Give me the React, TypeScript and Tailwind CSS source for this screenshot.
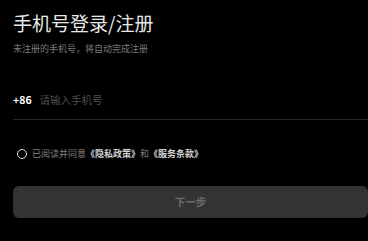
const App = () => {
  return (
    <div
      className="w-[368px] h-[241px] overflow-hidden bg-black pl-[13px] pt-[11px]"
      style={{ fontFamily: '"Noto Sans CJK SC", "Noto Sans", sans-serif' }}
    >
      {/* 标题 */}
      <h1 className="text-[19px] leading-[24px] text-[#e8e8e8]">手机号登录/注册</h1>
      <p className="mt-[8px] text-[9px] leading-[12px] text-[#7a7a7a]">
        未注册的手机号，将自动完成注册
      </p>

      {/* 手机号输入 */}
      <div className="mt-[26px] h-[39px] flex items-center border-b border-[#262626]">
        <span className="text-[10.5px] font-bold text-white">+86</span>
        <input
          className="ml-[8px] flex-1 bg-transparent outline-none text-[10.5px] text-white placeholder:text-[#4f4f4f]"
          placeholder="请输入手机号"
        />
      </div>

      {/* 协议 */}
      <div className="mt-[27px] h-[14px] flex items-center pl-[4px]">
        <span className="w-[10px] h-[10px] rounded-full border-[1.5px] border-[#dcdcdc]" />
        <span className="ml-[5px] text-[9px] leading-[14px] text-[#808080]">
          已阅读并同意
          <span className="text-[#d2d2d2] font-bold">《隐私政策》</span>和
          <span className="text-[#d2d2d2] font-bold">《服务条款》</span>
        </span>
      </div>

      {/* 下一步 */}
      <button className="mt-[25px] w-[355px] h-[32px] rounded-[6px] bg-[#333333] text-[10.5px] font-bold text-[#6b6b6b] flex items-center justify-center">
        下一步
      </button>
    </div>
  );
};

export default App;
